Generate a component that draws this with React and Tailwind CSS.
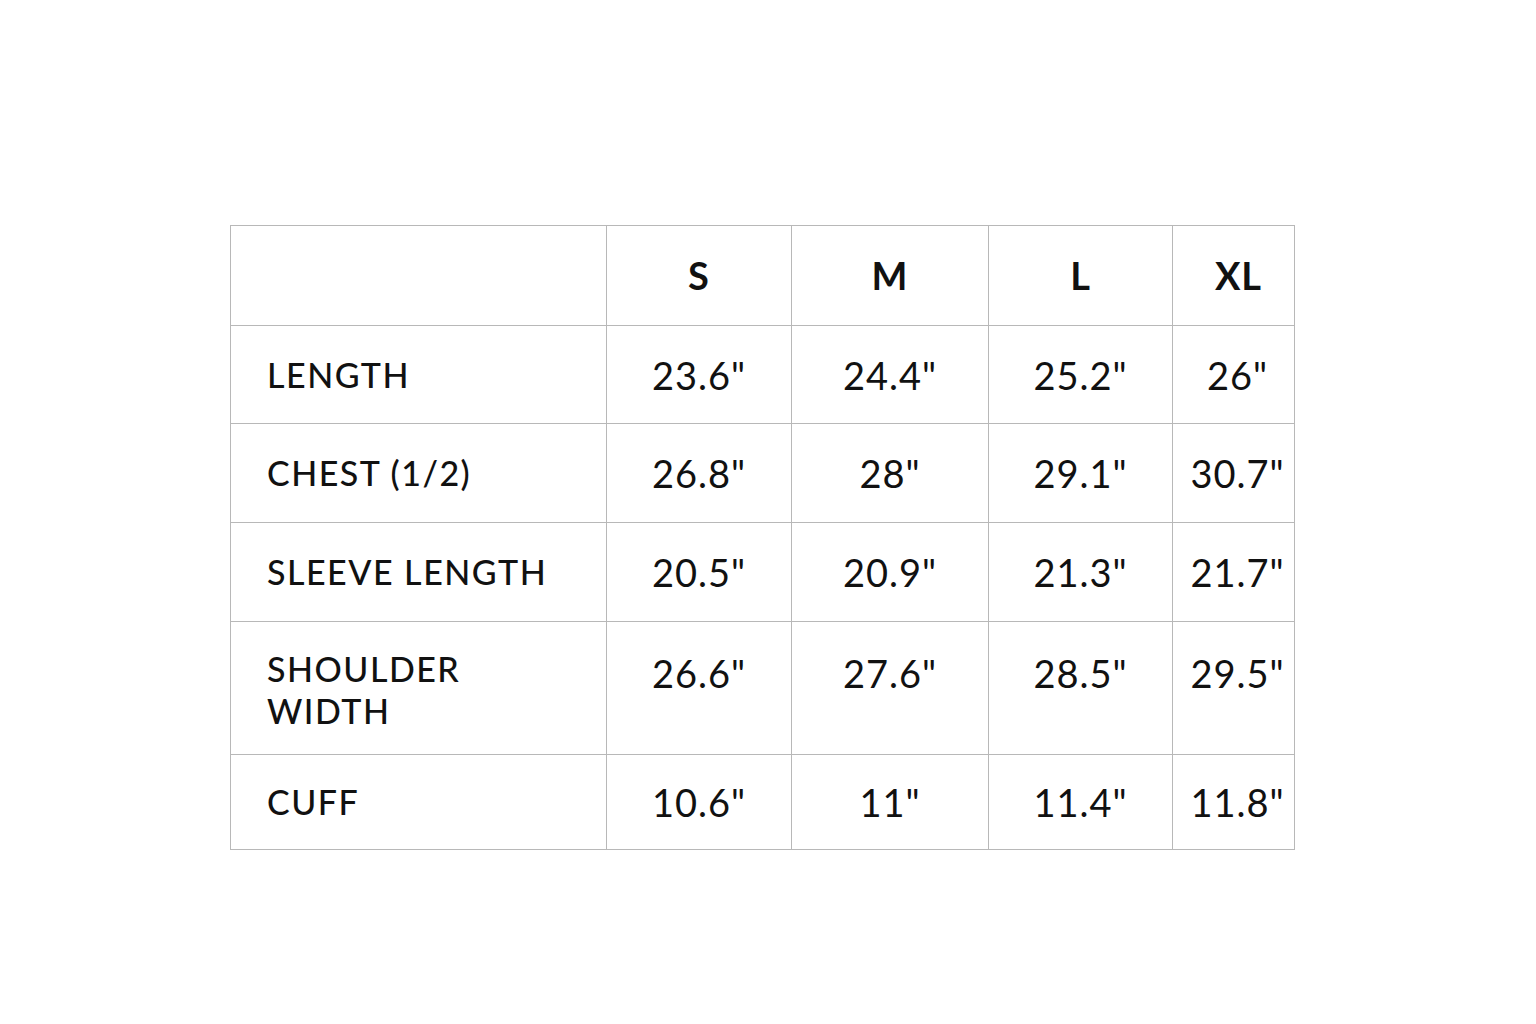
export default function App() {
  const rows = [
    { label: "LENGTH", vals: ['23.6"', '24.4"', '25.2"', '26"'] },
    { label: "CHEST (1/2)", vals: ['26.8"', '28"', '29.1"', '30.7"'] },
    { label: "SLEEVE LENGTH", vals: ['20.5"', '20.9"', '21.3"', '21.7"'] },
    { label: "SHOULDER WIDTH", vals: ['26.6"', '27.6"', '28.5"', '29.5"'], tall: true },
    { label: "CUFF", vals: ['10.6"', '11"', '11.4"', '11.8"'] },
  ];
  const cell = "border-r border-b border-[#b8b8b8]";
  return (
    <div className="min-h-screen w-full bg-white pl-[230px] pt-[225px]" style={{ fontFamily: "Lato, 'Open Sans', sans-serif" }}>
      <div className="grid w-[1065px] grid-cols-[376px_185px_197px_184px_122px] grid-rows-[100px_98px_99px_99px_133px_95px] border-l border-t border-[#b8b8b8] text-[#111]">
        <div className={cell}></div>
        {["S", "M", "L", "XL"].map((s, i) => (
          <div key={s} className={`${cell} flex items-center justify-center ${i === 3 ? "pl-[10px]" : ""} text-[38px] font-bold tracking-[1px]`}>{s}</div>
        ))}
        {rows.map((r) => (
          <>
            <div key={r.label} className={`${cell} flex ${r.tall ? "items-start pt-[26px]" : "items-center"} pl-[36px] ${r.tall ? "pr-[100px]" : "pr-[10px]"} whitespace-normal text-[34px] font-medium leading-[42px] tracking-[1.5px]`}>
              {r.label}
            </div>
            {r.vals.map((v, i) => (
              <div key={i} className={`${cell} flex ${r.tall ? "items-start pt-[30px]" : "items-center"} justify-center ${i === 3 ? "pl-[8px]" : ""} overflow-visible whitespace-nowrap text-[38px] font-normal leading-[42px] tracking-[1px]`}>
                {v}
              </div>
            ))}
          </>
        ))}
      </div>
    </div>
  );
}
